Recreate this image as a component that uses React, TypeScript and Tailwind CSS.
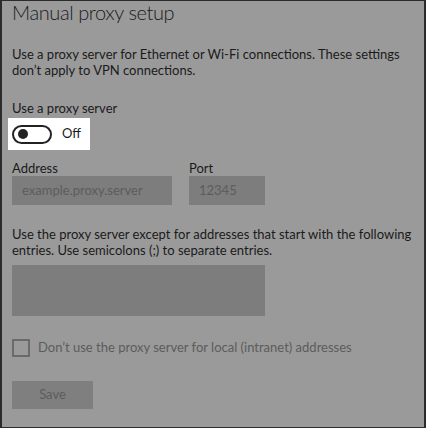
import React from "react";

export default function App() {
  return (
    <div className="w-[426px] h-[428px] bg-[#2b2b2b] py-[1px] px-[2px] box-border" style={{ fontFamily: 'Lato, "Noto Sans", sans-serif' }}>
      <div className="w-full h-full bg-[#9a9a9a] text-[#1a1a1a] flex flex-col pl-[10px] overflow-hidden whitespace-nowrap">
        <h1 className="text-[20px] font-light leading-[26px] -mt-[2px] tracking-[-0.4px] text-[#1a1a1a]">Manual proxy setup</h1>
        <p className="text-[13px] leading-[16px] mt-[21px]">
          Use a proxy server for Ethernet or Wi-Fi connections. These settings<br />don’t apply to VPN connections.
        </p>
        <div className="text-[13px] leading-[16px] mt-[22px]">Use a proxy server</div>
        <div className="mt-[2px] -ml-[4px] w-[82px] h-[32px] bg-white flex items-center pl-[4px]">
          <div className="w-[40px] h-[19px] rounded-full border-2 border-[#222] flex items-center pl-[4px] box-border">
            <div className="w-[10px] h-[10px] rounded-full bg-[#222]" />
          </div>
          <span className="ml-[10px] text-[13px] text-[#1a1a1a]">Off</span>
        </div>
        <div className="flex gap-[17px] mt-[10px]">
          <div className="flex flex-col">
            <span className="text-[13px] leading-[16px]">Address</span>
            <div className="w-[160px] h-[29px] bg-[#7d7d7d] flex items-center pl-[10px] text-[13px] text-[#5c5c5c]">example.proxy.server</div>
          </div>
          <div className="flex flex-col">
            <span className="text-[13px] leading-[16px]">Port</span>
            <div className="w-[76px] h-[29px] bg-[#7d7d7d] flex items-center pl-[10px] text-[13px] text-[#5c5c5c]">12345</div>
          </div>
        </div>
        <p className="text-[13px] leading-[16px] mt-[21px]">
          Use the proxy server except for addresses that start with the following<br />entries. Use semicolons (;) to separate entries.
        </p>
        <div className="mt-[7px] w-[253px] h-[51px] bg-[#7d7d7d]" />
        <div className="flex items-center mt-[23px] h-[18px]">
          <div className="w-[18px] h-[18px] border-2 border-[#6a6a6a] box-border" />
          <span className="ml-[8px] text-[13px] text-[#5c5c5c]">Don’t use the proxy server for local (intranet) addresses</span>
        </div>
        <div className="mt-[24px] w-[81px] h-[28px] bg-[#7f7f7f] flex items-center justify-center text-[13px] text-[#5c5c5c]">Save</div>
      </div>
    </div>
  );
}
